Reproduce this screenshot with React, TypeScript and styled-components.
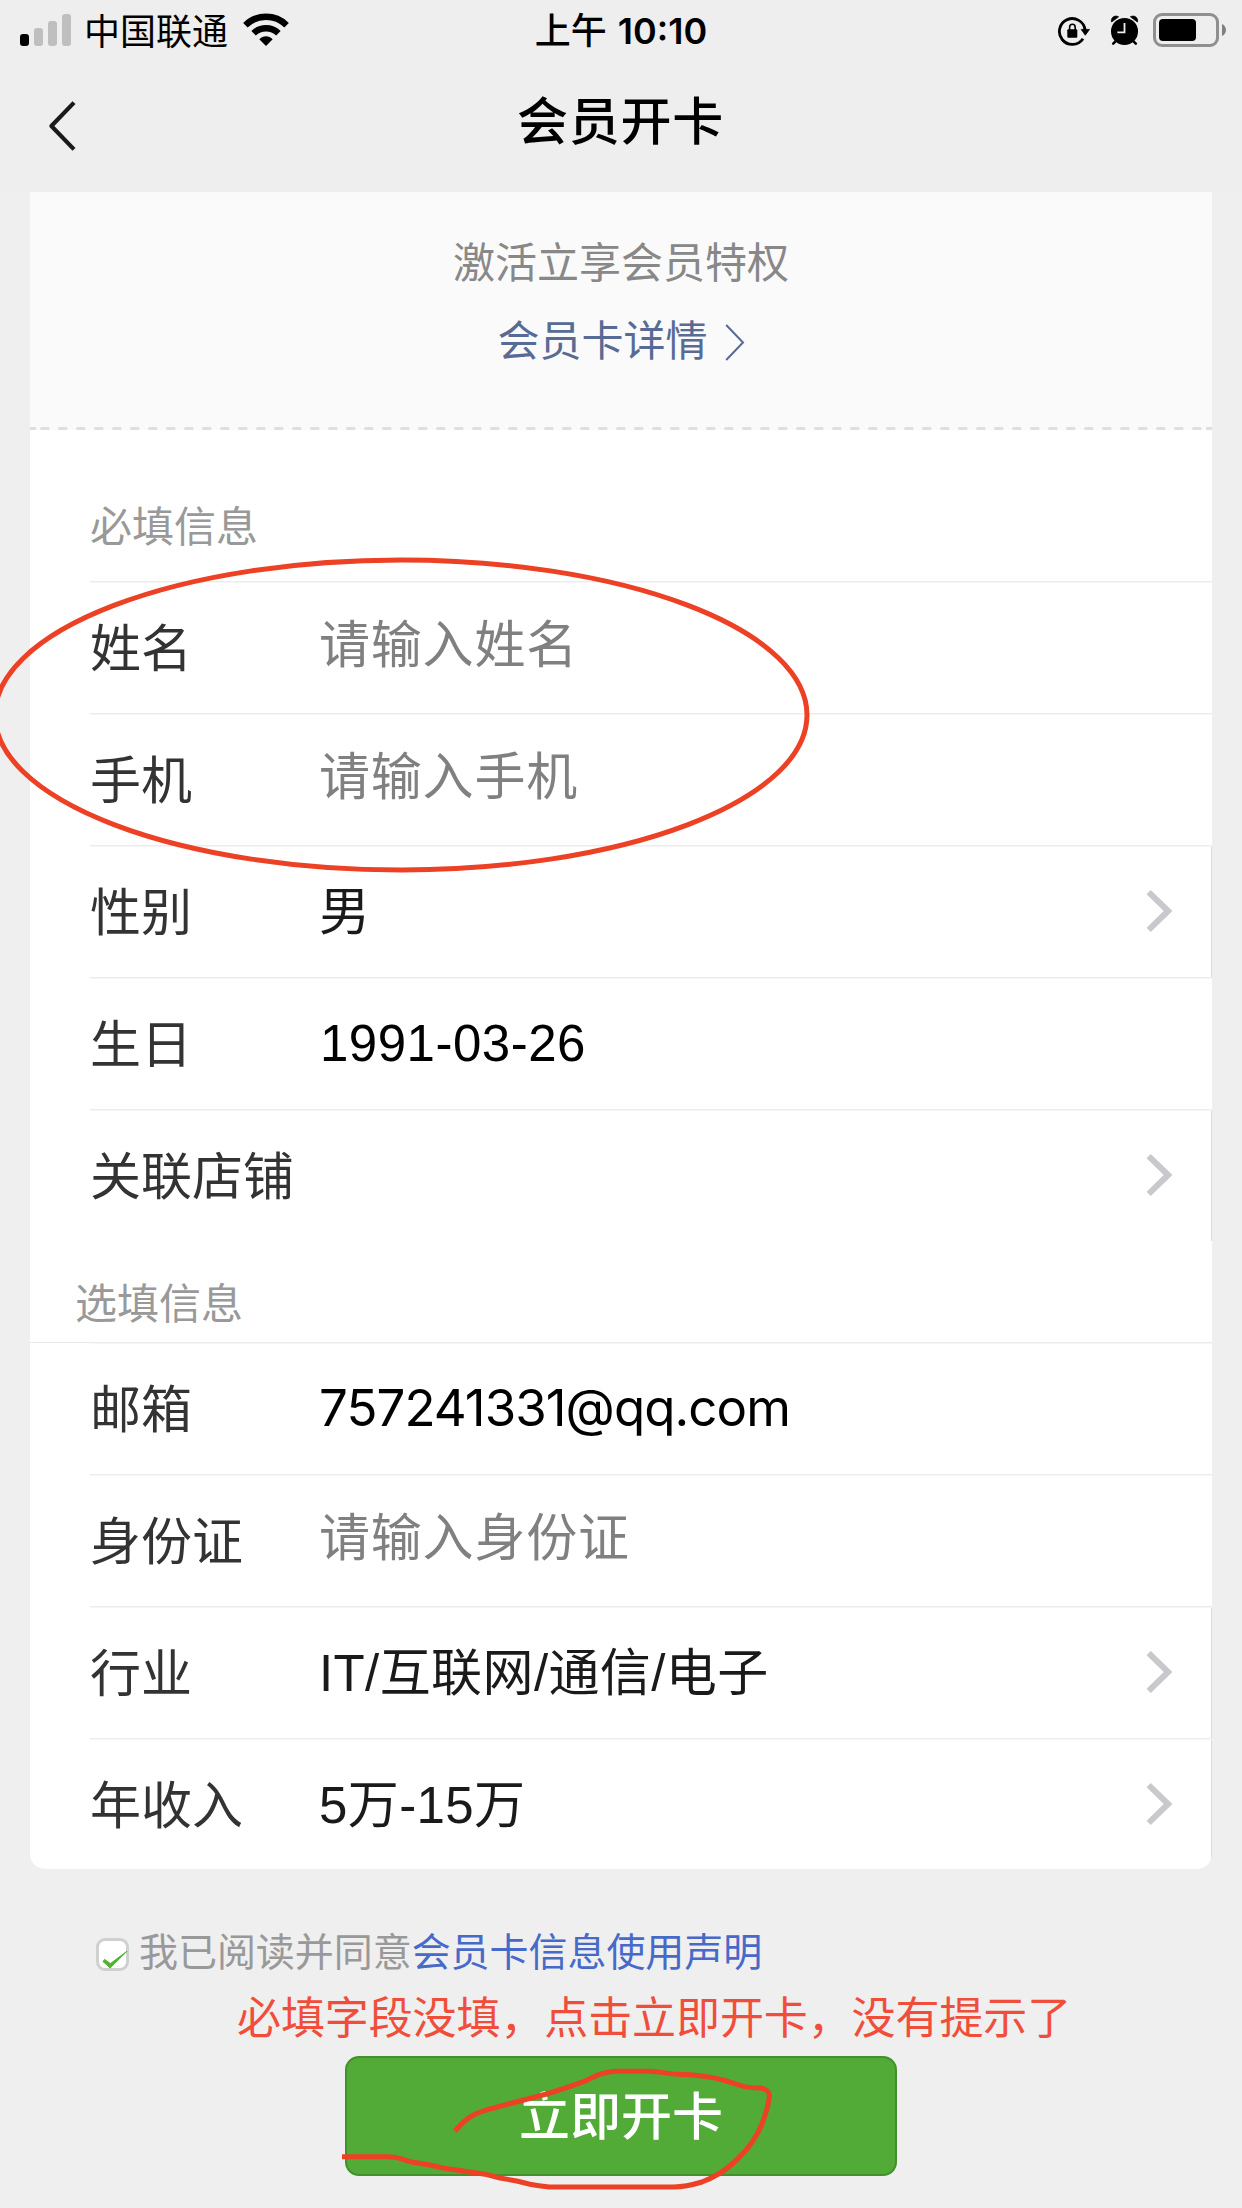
import React from "react";
import styled, { createGlobalStyle, css } from "styled-components";

const sans = `"Liberation Sans", "Noto Sans CJK SC", sans-serif`;
const system = `Inter, "Noto Sans CJK SC", sans-serif`;
const ink = "#ec4125";

const Global = createGlobalStyle`
  * { box-sizing: border-box; }
  html, body { margin: 0; padding: 0; background: #efefef; }
`;

const Screen = styled.div`
  position: relative;
  width: 1242px;
  height: 2208px;
  overflow: hidden;
  display: flex;
  flex-direction: column;
  background: #efefef;
  font-family: ${sans};
`;

const Top = styled.header`
  height: 192px;
  flex: none;
  background: #eeeeee;
`;

const StatusBar = styled.div`
  height: 60px;
  display: grid;
  grid-template-columns: 1fr auto 1fr;
  padding: 0 15px 0 20px;
  color: #000;
`;

const StatusSide = styled.div<{ $end?: boolean }>`
  display: flex;
  align-items: flex-start;
  justify-content: ${(p) => (p.$end ? "flex-end" : "flex-start")};
`;

const Carrier = styled.span`
  margin-left: 13px;
  font-size: 36px;
  line-height: 65px;
`;

const Clock = styled.span`
  margin-right: 5px;
  font-family: ${system};
  font-size: 36px;
  font-weight: 600;
  line-height: 63px;
  white-space: pre;
`;

const ClockPrefix = styled.span`
  font-weight: 500;
  margin-right: 2px;
`;

const NavBar = styled.div`
  height: 132px;
  display: grid;
  grid-template-columns: 160px 1fr 160px;
`;

const Title = styled.h1`
  margin: 0 1px 0 0;
  text-align: center;
  font-size: 51px;
  font-weight: 500;
  letter-spacing: 0.7px;
  line-height: 126px;
  color: #000;
`;

const Card = styled.main`
  width: 1182px;
  height: 1677px;
  flex: none;
  margin: 0 30px;
  background: #fff;
  border-radius: 0 0 15px 15px;
  overflow: hidden;
`;

const Intro = styled.section`
  height: 238px;
  display: flex;
  flex-direction: column;
  align-items: center;
  padding-top: 33px;
  background:
    linear-gradient(#dfdfdf, #dfdfdf) 0 100% / 6px 3px no-repeat,
    linear-gradient(#dfdfdf, #dfdfdf) 100% 100% / 6px 3px no-repeat,
    linear-gradient(90deg, #dfdfdf 9.5px, transparent 9.5px) 10.3px 100% / 18px 3px repeat-x,
    #fafafa;
`;

const IntroText = styled.p`
  margin: 0;
  font-size: 42px;
  line-height: 78px;
  color: #888;
`;

const IntroLink = styled.a`
  display: flex;
  font-size: 42px;
  line-height: 78px;
  color: #576b95;
`;

const SectionTitle = styled.h2<{ $optional?: boolean }>`
  margin: 0;
  font-size: 42px;
  font-weight: 400;
  color: #999;
  ${(p) =>
    p.$optional
      ? css`
          height: 102px;
          margin-bottom: -1px;
          padding-left: 45px;
          line-height: 127px;
          border-bottom: 1px solid #e8e8e8;
        `
      : css`
          height: 151px;
          padding-left: 60px;
          line-height: 196px;
        `}
`;

const Row = styled.div<{ $edge?: boolean }>`
  height: 132px;
  margin-left: 60px;
  padding-right: 39px;
  display: grid;
  grid-template-columns: 229px 1fr 27px;
  align-items: center;
  border-top: 1px solid #ececec;
  box-shadow: inset 0 1px 0 #f6f6f6
    ${(p) => (p.$edge ? ", inset -1px 0 0 #d9d9d9" : "")};
`;

const Label = styled.span`
  padding-top: 5px;
  font-size: 51px;
  line-height: 70px;
  color: #333;
  white-space: nowrap;
`;

type Kind = "placeholder" | "choice" | "date" | "email";

const Value = styled.span<{ $kind: Kind }>`
  padding-top: 2px;
  font-size: 51px;
  line-height: 70px;
  white-space: nowrap;
  color: #1a1a1a;
  letter-spacing: 0.4px;
  ${(p) =>
    p.$kind === "placeholder" &&
    css`
      color: #808080;
      letter-spacing: 0.8px;
      padding: 0 0 3px 0;
    `}
  ${(p) =>
    p.$kind === "date" &&
    css`
      color: #000;
      letter-spacing: 0.5px;
      padding: 1px 0 0 1px;
    `}
  ${(p) =>
    p.$kind === "email" &&
    css`
      color: #000;
      font-family: ${system};
      letter-spacing: -0.93px;
      padding: 0 0 2px;
    `}
`;

const Agreement = styled.label`
  height: 76px;
  margin: 45px 0 0 96px;
  display: flex;
  align-items: center;
  font-size: 39px;
  letter-spacing: -0.05px;
  color: #999;
`;

const AgreementText = styled.span`
  padding-bottom: 7px;
`;

const CheckBox = styled.span`
  width: 33px;
  height: 33px;
  margin: 4px 10px 0 0;
  border: 3px solid #d0d0d0;
  border-radius: 9px;
  background: #fff;
  display: flex;
`;

const Tick = styled.svg`
  flex: none;
  width: 30px;
  height: 27px;
  overflow: visible;
`;

const AgreementLink = styled.a`
  color: #476ac9;
`;

const Note = styled.p`
  margin: 0 0 0 237px;
  height: 66px;
  font-size: 44px;
  letter-spacing: -0.1px;
  line-height: 58px;
  color: #f04e3a;
  white-space: nowrap;
`;

const Submit = styled.button`
  width: 552px;
  height: 120px;
  flex: none;
  margin: 0 0 0 345px;
  padding: 3px 0 0;
  border: 2px solid #43912c;
  border-radius: 14px;
  background: #52aa37;
  color: #fff;
  font-family: ${sans};
  font-size: 51px;
  font-weight: 500;
  line-height: 113px;
`;

const Markup = styled.svg`
  position: absolute;
  inset: 0;
  pointer-events: none;
`;

const Icon = styled.svg<{ $x?: number; $y?: number }>`
  flex: none;
  display: block;
  margin: ${(p) => p.$y ?? 0}px 0 0 ${(p) => p.$x ?? 0}px;
`;

const Signal = () => (
  <Icon $y={14} width="51" height="32">
    <rect x="0" y="20" width="9" height="12" rx="3" fill="#000" />
    <rect x="14" y="14" width="9" height="18" rx="3" fill="#bfbfbf" />
    <rect x="28" y="7" width="9" height="25" rx="3" fill="#bfbfbf" />
    <rect x="42" y="0" width="9" height="32" rx="3" fill="#bfbfbf" />
  </Icon>
);

const Wifi = () => (
  <Icon $x={15} $y={13} width="46" height="34" viewBox="0 0 46 34">
    <path d="M2.4 12.2A29.5 29.5 0 0 1 43.6 12.2" fill="none" stroke="#000" strokeWidth="6.4" />
    <path d="M10.6 20.3A17.8 17.8 0 0 1 35.4 20.3" fill="none" stroke="#000" strokeWidth="6.4" />
    <path d="M23 33L16.3 26.3C20 22.2 26 22.2 29.7 26.3Z" fill="#000" />
  </Icon>
);

const RotationLock = () => (
  <Icon $y={16} width="34" height="32" viewBox="0 0 34 32">
    <path d="M27 22.7A12.9 12.9 0 1 1 29.1 14" fill="none" stroke="#000" strokeWidth="2.8" />
    <path d="M25.2 13.4H33.5L29.3 19.2Z" fill="#000" stroke="#000" strokeWidth="0.8" strokeLinejoin="round" />
    <rect x="11.3" y="13.3" width="10" height="8.5" rx="1" fill="#000" />
    <path d="M13.6 14V11.4A2.8 3.1 0 0 1 19.2 11.4V14" fill="none" stroke="#000" strokeWidth="1.6" />
  </Icon>
);

const Alarm = () => (
  <Icon $x={20} $y={15} width="29" height="31" viewBox="0 0 29 31">
    <circle cx="14.5" cy="16.4" r="13.5" fill="#000" />
    <path d="M1.6 7C0.4 3 4.5 -0.4 8.6 1.8ZM27.4 7C28.6 3 24.5 -0.4 20.4 1.8Z" fill="#000" stroke="#000" strokeWidth="0.8" strokeLinejoin="round" />
    <path d="M3.2 28.6L6.2 25.6M25.8 28.6L22.8 25.6" stroke="#000" strokeWidth="2.6" strokeLinecap="round" />
    <path d="M14.5 8V17.4H7.4" fill="none" stroke="#eee" strokeWidth="1.8" />
  </Icon>
);

const Battery = () => (
  <Icon $x={14} $y={13} width="74" height="34" viewBox="0 0 74 34">
    <rect x="1.5" y="1.5" width="63" height="31" rx="7.5" fill="none" stroke="#8f8f8f" strokeWidth="3" />
    <rect x="6" y="6" width="37" height="22" rx="4" fill="#000" />
    <path d="M69 11C74.3 13 74.3 21 69 23Z" fill="#808080" />
  </Icon>
);

const Back = () => (
  <Icon $x={47} $y={40} width="30" height="52" viewBox="0 0 30 52">
    <path d="M27 2.6L4.4 26L27 49.4" fill="none" stroke="#1a1a1a" strokeWidth="4.2" strokeLinejoin="round" />
  </Icon>
);

const LinkArrow = () => (
  <Icon $x={17} $y={21} width="20" height="37" viewBox="0 0 20 37">
    <path d="M1.2 1L18 18.5L1.2 36" fill="none" stroke="#576b95" strokeWidth="2" />
  </Icon>
);

const ChevronIcon = styled(Icon)`
  margin-bottom: 2px;
`;

const Chevron = () => (
  <ChevronIcon width="27" height="42" viewBox="0 0 27 42">
    <path d="M2.7 2.2L22.1 21L2.7 39.8" fill="none" stroke="#c8c8cd" strokeWidth="6" />
  </ChevronIcon>
);

type Field = { label: string; value?: string; kind?: Kind; picker?: boolean };

const required: Field[] = [
  { label: "姓名", value: "请输入姓名", kind: "placeholder" },
  { label: "手机", value: "请输入手机", kind: "placeholder" },
  { label: "性别", value: "男", kind: "choice", picker: true },
  { label: "生日", value: "1991-03-26", kind: "date" },
  { label: "关联店铺", picker: true },
];

const optional: Field[] = [
  { label: "邮箱", value: "757241331@qq.com", kind: "email" },
  { label: "身份证", value: "请输入身份证", kind: "placeholder" },
  { label: "行业", value: "IT/互联网/通信/电子", kind: "choice", picker: true },
  { label: "年收入", value: "5万-15万", kind: "choice", picker: true },
];

const Fields = ({ items }: { items: Field[] }) => (
  <>
    {items.map((f) => (
      <Row key={f.label} $edge={f.picker}>
        <Label>{f.label}</Label>
        <Value $kind={f.kind ?? "choice"}>{f.value}</Value>
        {f.picker && <Chevron />}
      </Row>
    ))}
  </>
);

export default function App() {
  return (
    <Screen>
      <Global />
      <Top>
        <StatusBar>
          <StatusSide>
            <Signal />
            <Carrier>中国联通</Carrier>
            <Wifi />
          </StatusSide>
          <Clock>
            <ClockPrefix>上午</ClockPrefix> 10:10
          </Clock>
          <StatusSide $end>
            <RotationLock />
            <Alarm />
            <Battery />
          </StatusSide>
        </StatusBar>
        <NavBar>
          <Back />
          <Title>会员开卡</Title>
        </NavBar>
      </Top>
      <Card>
        <Intro>
          <IntroText>激活立享会员特权</IntroText>
          <IntroLink>
            会员卡详情
            <LinkArrow />
          </IntroLink>
        </Intro>
        <SectionTitle>必填信息</SectionTitle>
        <Fields items={required} />
        <SectionTitle $optional>选填信息</SectionTitle>
        <Fields items={optional} />
      </Card>
      <Agreement>
        <CheckBox>
          <Tick viewBox="0 0 30 27">
            <path d="M4 20.5L11.2 27L28 10.2L11.4 22.6L5.6 18.4Z" fill="#4fb531" stroke="#4fb531" strokeWidth="1" />
          </Tick>
        </CheckBox>
        <AgreementText>
          我已阅读并同意<AgreementLink>会员卡信息使用声明</AgreementLink>
        </AgreementText>
      </Agreement>
      <Note>必填字段没填，点击立即开卡，没有提示了</Note>
      <Submit>立即开卡</Submit>
      <Markup width="1242" height="2208" viewBox="0 0 1242 2208" fill="none" stroke={ink} strokeWidth="5">
        <ellipse cx="401" cy="715" rx="406" ry="155" />
        <path d="M455 2131C461 2124 467 2118 473.500 2115C480 2111.500 485 2110.500 490 2109C500 2106 528 2099 546.700 2094C560 2090 572 2086 583.500 2081.700C594 2077 601 2072 616 2071.300H649C660 2071.300 668 2074 678 2074.300C688 2074.500 704 2075 723 2080C729 2081.500 735 2084 739 2085C746 2087.500 754 2088 761 2088C766 2089 769.500 2091 769.500 2096C768 2108 765 2116 762 2124C758 2134 755 2138 751.500 2143C746 2151 739 2158 731 2165C722 2173 712 2178 702 2182C692 2185 684 2187 674 2187H549C543 2186.500 534 2185 530 2184.300L516.700 2181L500 2178L486.700 2174.500L463 2171L443 2168L430 2165L411.700 2162C404 2160 398 2156.700 388 2156.700H342" />
      </Markup>
    </Screen>
  );
}
